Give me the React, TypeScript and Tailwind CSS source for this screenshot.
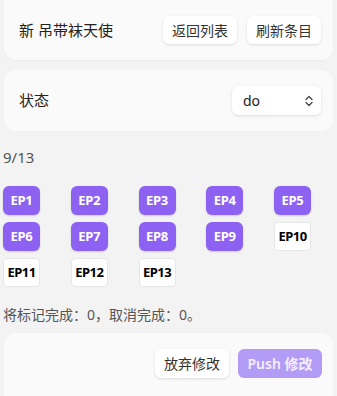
import React, { useState } from "react";

const FONT = "font-['Noto_Sans','Noto_Sans_CJK_SC',sans-serif]";

const TOTAL = 13;

export default function App() {
  const [status] = useState("do");
  const done = [1, 2, 3, 4, 5, 6, 7, 8, 9];

  return (
    <div className={`min-h-[396px] w-[337px] overflow-hidden bg-[#f3f3f3] ${FONT}`}>
      {/* HEADER CARD */}
      <div className="mx-1 flex h-[60px] items-center justify-between rounded-b-xl bg-[#fafafa] pl-[15px] pr-3 shadow-[0_1px_2px_rgba(0,0,0,0.03)]">
        <h1 className="text-[15px] text-[#222]">新 吊带袜天使</h1>
        <div className="flex gap-[10px]">
          <button className="h-[28px] w-[74px] rounded-md bg-white text-[14px] text-[#333] shadow-[0_1px_3px_rgba(0,0,0,0.12)]">
            返回列表
          </button>
          <button className="h-[28px] w-[74px] rounded-md bg-white text-[14px] text-[#333] shadow-[0_1px_3px_rgba(0,0,0,0.12)]">
            刷新条目
          </button>
        </div>
      </div>

      {/* STATUS CARD */}
      <div className="mx-1 mt-[10px] flex h-[61px] items-center justify-between rounded-xl bg-[#fafafa] pl-[15px] pr-3">
        <span className="text-[15px] text-[#222]">状态</span>
        <div className="flex h-[29px] w-[89px] items-center justify-between rounded-md bg-white pl-[11px] pr-[7px] shadow-[0_1px_3px_rgba(0,0,0,0.12)]">
          <span className="text-[14px] text-[#222]">{status}</span>
          <svg width="10" height="12" viewBox="0 0 10 12" fill="none" stroke="#444" strokeWidth="1.3" strokeLinecap="round" strokeLinejoin="round">
            <path d="M2 4.5 L5 1.5 L8 4.5" />
            <path d="M2 7.5 L5 10.5 L8 7.5" />
          </svg>
        </div>
      </div>

      {/* PROGRESS */}
      <p className="mt-[15px] pl-[3px] text-[15px] leading-[22px] text-[#555]">
        {done.length}/{TOTAL}
      </p>

      <div className="mt-[18px] grid grid-cols-[repeat(5,67.75px)] gap-y-[7px] pl-[3px]">
        {Array.from({ length: TOTAL }, (_, i) => i + 1).map((n) =>
          done.includes(n) ? (
            <button
              key={n}
              className="h-[29px] w-[37px] rounded-md bg-[#8d62f2] text-[13px] font-bold tracking-[-0.3px] text-white shadow-[0_1px_2px_rgba(0,0,0,0.15)]"
            >
              EP{n}
            </button>
          ) : (
            <button
              key={n}
              className="h-[29px] w-[37px] rounded-[4px] border border-[#e6e6e6] bg-white text-[13px] font-bold tracking-[-0.5px] text-black"
            >
              EP{n}
            </button>
          )
        )}
      </div>

      <p className="mt-[17px] pl-[3px] text-[14px] leading-[22px] text-[#555]">
        将标记完成：0，取消完成：0。
      </p>

      {/* FOOTER CARD */}
      <div className="mx-1 mt-[7px] flex h-[80px] justify-end gap-[9px] rounded-t-xl bg-[#fafafa] pr-[11px] pt-4">
        <button className="h-[29px] w-[74px] rounded-md bg-white text-[14px] text-[#333] shadow-[0_1px_3px_rgba(0,0,0,0.12)]">
          放弃修改
        </button>
        <button className="h-[29px] w-[84px] rounded-md bg-[#b39cf5] text-[14px] font-semibold text-[#f4efff]">
          Push 修改
        </button>
      </div>
    </div>
  );
}
